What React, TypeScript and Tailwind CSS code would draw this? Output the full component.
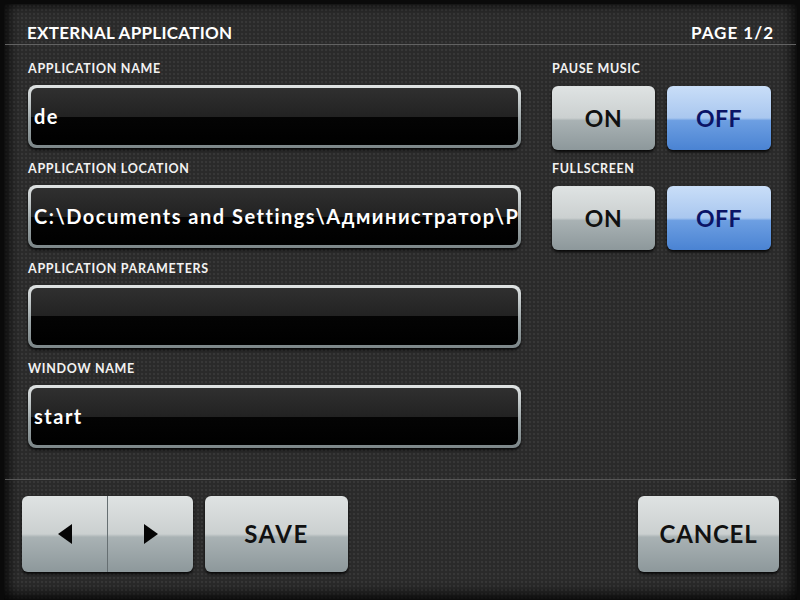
import React from 'react';

const font = { fontFamily: 'Lato, "DejaVu Sans", sans-serif' };

const Field = ({ label, value }: { label: string; value: string }) => (
  <div className="flex flex-col">
    <div className="h-[16px] leading-[16px] text-[12.5px] font-bold text-[#f2f2f2] tracking-[0.7px]">{label}</div>
    <div className="mt-[8px] h-[63px] rounded-[8px] p-[3px] bg-[linear-gradient(#e0e4e4,#9aa4a6_60%,#7c8688)] shadow-[0_2px_3px_rgba(0,0,0,0.8)]">
      <div className="h-full rounded-[6px] overflow-hidden bg-[linear-gradient(#303030,#222_50%,#040404_50%,#000)] flex items-center pl-[3px] pb-[1px]">
        <span className="whitespace-nowrap text-[20px] font-bold text-white leading-none tracking-[1.5px]">{value}</span>
      </div>
    </div>
  </div>
);

const greyBtn =
  'bg-[linear-gradient(#dfe3e3,#cbd0d0_50%,#a9b2b4_54%,#8d989b)] text-[#111] shadow-[0_2px_3px_rgba(0,0,0,0.85)] rounded-[6px]';
const blueBtn =
  'bg-[linear-gradient(#c9def8,#a9c7ef_50%,#6d9fe2_54%,#4a83d3)] text-[#0b1466] shadow-[0_2px_3px_rgba(0,0,0,0.85)] rounded-[6px]';

const Toggle = ({ label }: { label: string }) => (
  <div className="flex flex-col">
    <div className="h-[16px] leading-[16px] text-[12.5px] font-bold text-[#f2f2f2] tracking-[0.6px]">{label}</div>
    <div className="mt-[9px] flex gap-[12px]">
      <div className={`${greyBtn} w-[103px] h-[64px] flex items-center justify-center text-[23px] font-bold tracking-[0.5px]`}>ON</div>
      <div className={`${blueBtn} w-[104px] h-[64px] flex items-center justify-center text-[23px] font-bold tracking-[0.5px]`}>OFF</div>
    </div>
  </div>
);

const Tri = ({ dir }: { dir: 'l' | 'r' }) => (
  <svg width="16" height="22" viewBox="0 0 16 22">
    <path d={dir === 'l' ? 'M15 1 L1 11 L15 21 Z' : 'M1 1 L15 11 L1 21 Z'} fill="#050505" />
  </svg>
);

export default function App() {
  return (
    <div
      style={font}
      className="w-[800px] h-[600px] bg-[#151515] border-t-[4px] border-l-[4px] border-r-[3px] border-[#0a0a0a] overflow-hidden"
    >
      <div className="w-full h-full flex flex-col bg-[#2a2a2a] bg-[radial-gradient(circle,#373737_1px,transparent_1.6px)] bg-[length:4px_4px] shadow-[inset_6px_0_10px_rgba(0,0,0,0.55),inset_-6px_0_10px_rgba(0,0,0,0.55),inset_0_-8px_12px_rgba(0,0,0,0.5)]">
        <div className="h-[40px] flex items-end justify-between pl-[23px] pr-[23px]">
          <span className="text-[17px] leading-[22px] font-bold text-white tracking-[0.3px]">EXTERNAL APPLICATION</span>
          <span className="text-[17px] leading-[22px] font-bold text-white tracking-[1px]">PAGE 1/2</span>
        </div>
        <div className="mx-[1px] h-[1px] bg-[#626262]" />
        <div className="flex h-[434px] pt-[16px] pl-[24px]">
          <div className="w-[493px] flex flex-col gap-[13px]">
            <Field label="APPLICATION NAME" value="de" />
            <Field label="APPLICATION LOCATION" value="C:\Documents and Settings\Администратор\P" />
            <Field label="APPLICATION PARAMETERS" value="" />
            <Field label="WINDOW NAME" value="start" />
          </div>
          <div className="ml-[31px] flex flex-col gap-[11px]">
            <Toggle label="PAUSE MUSIC" />
            <Toggle label="FULLSCREEN" />
          </div>
        </div>
        <div className="mx-[1px] h-[1px] bg-[#565656]" />
        <div className="flex items-start pt-[16px] pl-[18px] pr-[18px]">
          <div className={`${greyBtn} w-[171px] h-[76px] flex`}>
            <div className="flex-1 flex items-center justify-center border-r border-[#666f72]">
              <Tri dir="l" />
            </div>
            <div className="flex-1 flex items-center justify-center">
              <Tri dir="r" />
            </div>
          </div>
          <div className={`${greyBtn} ml-[12px] w-[143px] h-[76px] flex items-center justify-center text-[24px] font-bold tracking-[1.5px]`}>
            SAVE
          </div>
          <div className={`${greyBtn} ml-auto w-[141px] h-[76px] flex items-center justify-center text-[24px] font-bold tracking-[0.8px]`}>
            CANCEL
          </div>
        </div>
      </div>
    </div>
  );
}
